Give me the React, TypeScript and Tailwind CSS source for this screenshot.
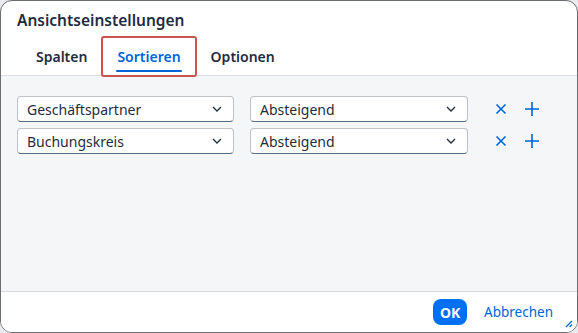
import React from "react";

// Sort settings dialog (static).
const rows = [
  { field: "Geschäftspartner", order: "Absteigend" },
  { field: "Buchungskreis", order: "Absteigend" },
];

function Chevron() {
  return (
    <svg width="12" height="12" viewBox="0 0 12 12" className="shrink-0">
      <path d="M2 4l4 4 4-4" fill="none" stroke="#1d2d3e" strokeWidth="1.3" />
    </svg>
  );
}

function Select({ value, width }: { value: string; width: string }) {
  return (
    <div
      className={`${width} flex h-[26px] items-center justify-between rounded-[4px] border border-[#bcc3ca] border-b-[#556b82] bg-white pl-[9px] pr-[10px] text-[14px] text-[#1d2d3e]`}
    >
      <span>{value}</span>
      <Chevron />
    </div>
  );
}

export default function App() {
  return (
    <div
      className="h-[333px] w-[578px] bg-[#e8ebef]"
      style={{ fontFamily: '"Noto Sans", "Liberation Sans", sans-serif' }}
    >
      <div className="relative flex h-full flex-col overflow-hidden rounded-[12px] border border-[#6a6d70] bg-white">
        <div className="flex h-[37px] items-center px-4 pt-[2px] text-[15.5px] font-semibold text-[#1d2d3e]">
          Ansichtseinstellungen
        </div>

        <div className="flex h-[38px] items-stretch border-b border-[#dcdfe3] px-5 text-[14px] font-semibold text-[#1d2d3e]">
          <div className="flex items-center px-[15px]">Spalten</div>
          <div className="relative mx-[1px] flex items-center rounded-[1px] px-[14px] outline outline-2 outline-[#c9534f]">
            <span className="text-[#0064d9]">Sortieren</span>
            <span className="absolute bottom-[3px] left-[13px] right-[13px] h-[2px] rounded-full bg-[#0064d9]" />
          </div>
          <div className="flex items-center px-[15px]">Optionen</div>
        </div>

        <div className="flex flex-1 flex-col gap-[6px] bg-[#f5f6f7] px-4 pt-[20px]">
          {rows.map((r) => (
            <div key={r.field} className="flex items-center">
              <Select value={r.field} width="w-[217px]" />
              <div className="w-[16px]" />
              <Select value={r.order} width="w-[218px]" />
              <div className="ml-[26px] flex items-center gap-[16px] text-[#0064d9]">
                <svg width="14" height="14" viewBox="0 0 14 14">
                  <path d="M2.5 2.5l9 9M11.5 2.5l-9 9" stroke="#0064d9" strokeWidth="1.6" />
                </svg>
                <svg width="16" height="16" viewBox="0 0 16 16">
                  <path d="M8 1v14M1 8h14" stroke="#0064d9" strokeWidth="1.6" />
                </svg>
              </div>
            </div>
          ))}
        </div>

        <div className="flex h-[41px] items-center justify-end gap-[17px] border-t border-[#d9d9d9] bg-white pr-[24px]">
          <button className="h-[26px] w-[34px] rounded-[8px] bg-[#0070f2] text-[14px] font-bold text-white">
            OK
          </button>
          <span className="text-[13.5px] font-normal text-[#0064d9]">Abbrechen</span>
        </div>

        <svg width="10" height="10" viewBox="0 0 10 10" className="absolute bottom-[4px] right-[4px]">
          <path d="M9 3L3 9M9 6.5L6.5 9" stroke="#0064d9" strokeWidth="1.2" />
        </svg>
      </div>
    </div>
  );
}
